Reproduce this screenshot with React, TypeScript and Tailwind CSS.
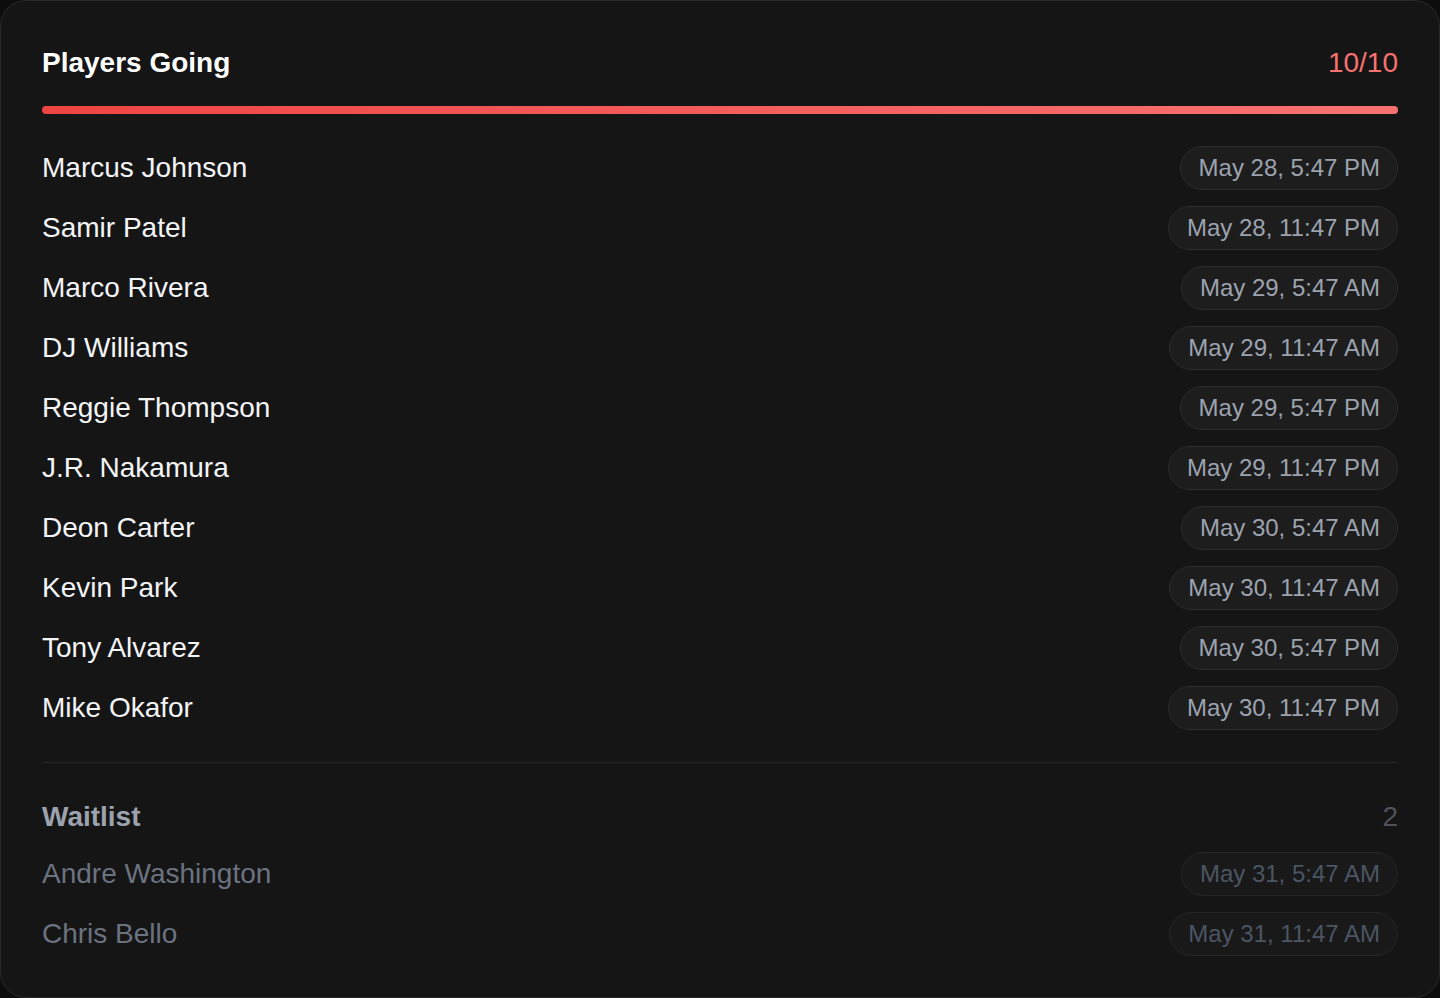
const going = [
  { name: "Marcus Johnson", time: "May 28, 5:47 PM" },
  { name: "Samir Patel", time: "May 28, 11:47 PM" },
  { name: "Marco Rivera", time: "May 29, 5:47 AM" },
  { name: "DJ Williams", time: "May 29, 11:47 AM" },
  { name: "Reggie Thompson", time: "May 29, 5:47 PM" },
  { name: "J.R. Nakamura", time: "May 29, 11:47 PM" },
  { name: "Deon Carter", time: "May 30, 5:47 AM" },
  { name: "Kevin Park", time: "May 30, 11:47 AM" },
  { name: "Tony Alvarez", time: "May 30, 5:47 PM" },
  { name: "Mike Okafor", time: "May 30, 11:47 PM" },
];

const waitlist = [
  { name: "Andre Washington", time: "May 31, 5:47 AM" },
  { name: "Chris Bello", time: "May 31, 11:47 AM" },
];

export default function App() {
  return (
    <div className="min-h-screen bg-[#0d0d0d] font-['Liberation_Sans',Arial,sans-serif]">
      <div className="h-[998px] rounded-[26px] border border-[#2a2a2a] bg-[#151515] px-[41px] pt-[40px]">
        {/* Header */}
        <div className="flex h-[44px] items-center justify-between">
          <h2 className="text-[28px] font-bold text-white">Players Going</h2>
          <span className="text-[28px] text-[#f87171]">10/10</span>
        </div>
        <div className="mt-[21px] h-[8px] rounded-full bg-gradient-to-r from-[#ef4444] to-[#f87171]" />

        {/* Roster */}
        <div className="mt-[32px] flex flex-col gap-[16px]">
          {going.map((p) => (
            <div key={p.name} className="flex h-[44px] items-center justify-between">
              <span className="text-[28px] text-[#f3f4f6]">{p.name}</span>
              <span className="rounded-full border border-[#2c2c2c] bg-[#1d1d1d] pl-[18px] pr-[17px] py-[7px] text-[24px] leading-[28px] text-[#9ca3af]">
                {p.time}
              </span>
            </div>
          ))}
        </div>

        <div className="mt-[32px] h-px bg-[#262626]" />

        {/* Waitlist */}
        <div className="mt-[32px] flex h-[44px] items-center justify-between">
          <h3 className="text-[28px] font-bold text-[#9ca3af]">Waitlist</h3>
          <span className="text-[28px] text-[#52525b]">2</span>
        </div>
        <div className="mt-[13px] flex flex-col gap-[16px]">
          {waitlist.map((p) => (
            <div key={p.name} className="flex h-[44px] items-center justify-between">
              <span className="text-[28px] text-[#6b7280]">{p.name}</span>
              <span className="rounded-full border border-[#262626] bg-[#191919] pl-[18px] pr-[17px] py-[7px] text-[24px] leading-[28px] text-[#4b5563]">
                {p.time}
              </span>
            </div>
          ))}
        </div>
      </div>
    </div>
  );
}
